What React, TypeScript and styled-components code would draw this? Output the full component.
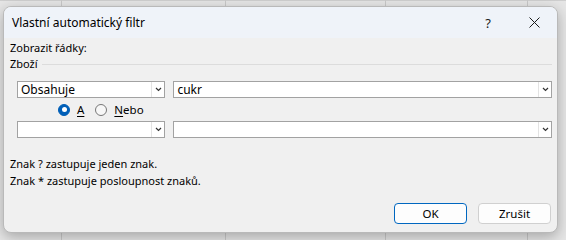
import React, { useState } from 'react';
import styled, { createGlobalStyle } from 'styled-components';

const GlobalStyle = createGlobalStyle`
  html, body {
    margin: 0;
    padding: 0;
  }
  body {
    width: 566px;
    height: 240px;
    overflow: hidden;
    font-family: "Noto Sans", "Open Sans", sans-serif;
    background-color: #e6e6e6;
    background-image:
      linear-gradient(#c9c9c9, #c9c9c9),
      linear-gradient(#c9c9c9, #c9c9c9),
      linear-gradient(#c9c9c9, #c9c9c9),
      linear-gradient(#c9c9c9, #c9c9c9),
      linear-gradient(#cfcfcf, #cfcfcf);
    background-size: 1px 240px, 1px 240px, 1px 240px, 1px 240px, 566px 1px;
    background-position: 61px 0, 225px 0, 385px 0, 527px 0, 0 0;
    background-repeat: no-repeat;
  }
`;

const Page = styled.div`
  padding: 6px 0 0 3px;
`;

const Dialog = styled.div`
  width: 555px;
  height: 227px;
  box-sizing: border-box;
  border: 1px solid #b9b9b9;
  border-radius: 8px;
  background: #f0f0f0;
  box-shadow: 0 4px 14px rgba(0, 0, 0, 0.28);
  overflow: hidden;
  display: flex;
  flex-direction: column;
  color: #000;
  font-size: 11px;
`;

const TitleBar = styled.div`
  height: 31px;
  background: #eff3f9;
  display: flex;
  align-items: center;
  padding-left: 8px;
  flex-shrink: 0;
`;

const Title = styled.div`
  flex: 1;
  font-size: 12px;
`;

const TitleButton = styled.button`
  width: 46px;
  height: 31px;
  border: none;
  background: transparent;
  padding: 0;
  display: flex;
  align-items: center;
  justify-content: center;
  font-family: inherit;
  font-size: 13px;
  color: #1a1a1a;
`;

const Body = styled.div`
  flex: 1;
  padding: 2px 5px 0 6px;
  display: flex;
  flex-direction: column;
`;

const Label = styled.div`
  line-height: 16px;
`;

const GroupHeader = styled.div`
  display: flex;
  align-items: center;
  gap: 4px;
  line-height: 16px;
  &::after {
    content: '';
    flex: 1;
    height: 1px;
    background: #dcdcdc;
  }
`;

const Criteria = styled.div`
  padding: 9px 0 0 7px;
  display: flex;
  flex-direction: column;
`;

const FieldRow = styled.div`
  display: flex;
  gap: 8px;
`;

const Combo = styled.div<{ $width: number }>`
  width: ${({ $width }) => $width}px;
  height: 17px;
  box-sizing: border-box;
  border: 1px solid #a2a2a2;
  background: #fff;
  display: flex;
  align-items: stretch;
`;

const ComboText = styled.div`
  flex: 1;
  padding-left: 3px;
  line-height: 15px;
  font-size: 12px;
`;

const ComboArrow = styled.div`
  width: 12px;
  border-left: 1px solid #e3e3e3;
  display: flex;
  align-items: center;
  justify-content: center;
`;

const RadioRow = styled.div`
  height: 23px;
  display: flex;
  align-items: center;
  padding-left: 41px;
  gap: 11px;
`;

const RadioOption = styled.label`
  display: flex;
  align-items: center;
  gap: 7px;
  font-size: 11.5px;
`;

const RadioCircle = styled.span<{ $checked: boolean }>`
  width: 12px;
  height: 12px;
  box-sizing: border-box;
  border-radius: 50%;
  display: inline-flex;
  align-items: center;
  justify-content: center;
  background: ${({ $checked }) => ($checked ? '#005fb8' : '#f7f7f7')};
  border: 1px solid ${({ $checked }) => ($checked ? '#005fb8' : '#777')};
  &::after {
    content: '';
    display: ${({ $checked }) => ($checked ? 'block' : 'none')};
    width: 5px;
    height: 5px;
    border-radius: 50%;
    background: #fff;
  }
`;

const Mnemonic = styled.span`
  text-decoration: underline;
  text-underline-offset: 2px;
`;

const Hints = styled.div`
  margin-top: 18px;
  display: flex;
  flex-direction: column;
  gap: 1px;
`;

const Hint = styled.div`
  line-height: 16px;
`;

const Footer = styled.div`
  margin-top: auto;
  padding: 0 1px 8px 0;
  display: flex;
  justify-content: flex-end;
  gap: 11px;
`;

const Button = styled.button<{ $primary?: boolean }>`
  width: 73px;
  height: 21px;
  box-sizing: border-box;
  border-radius: 4px;
  border: 1px solid ${({ $primary }) => ($primary ? '#0067c0' : '#d0d0d0')};
  background: #fdfdfd;
  font-family: inherit;
  font-size: 11.5px;
  color: #000;
  padding: 0;
`;

const Chevron = () => (
  <svg width="7" height="5" viewBox="0 0 7 5">
    <path d="M1 1 L3.5 3.5 L6 1" fill="none" stroke="#333" strokeWidth="1.2" />
  </svg>
);

export default function App() {
  const [mode, setMode] = useState<'and' | 'or'>('and');

  return (
    <>
      <GlobalStyle />
      <Page>
        <Dialog>
          <TitleBar>
            <Title>Vlastní automatický filtr</Title>
            <TitleButton>?</TitleButton>
            <TitleButton>
              <svg width="11" height="11" viewBox="0 0 11 11">
                <path d="M0.5 0.5 L10.5 10.5 M10.5 0.5 L0.5 10.5" stroke="#1a1a1a" strokeWidth="1" />
              </svg>
            </TitleButton>
          </TitleBar>
          <Body>
            <Label>Zobrazit řádky:</Label>
            <GroupHeader>Zboží</GroupHeader>
            <Criteria>
              <FieldRow>
                <Combo $width={149}>
                  <ComboText>Obsahuje</ComboText>
                  <ComboArrow><Chevron /></ComboArrow>
                </Combo>
                <Combo $width={380}>
                  <ComboText>cukr</ComboText>
                  <ComboArrow><Chevron /></ComboArrow>
                </Combo>
              </FieldRow>
              <RadioRow>
                <RadioOption onClick={() => setMode('and')}>
                  <RadioCircle $checked={mode === 'and'} />
                  <Mnemonic>A</Mnemonic>
                </RadioOption>
                <RadioOption onClick={() => setMode('or')}>
                  <RadioCircle $checked={mode === 'or'} />
                  <span><Mnemonic>N</Mnemonic>ebo</span>
                </RadioOption>
              </RadioRow>
              <FieldRow>
                <Combo $width={149}>
                  <ComboText />
                  <ComboArrow><Chevron /></ComboArrow>
                </Combo>
                <Combo $width={380}>
                  <ComboText />
                  <ComboArrow><Chevron /></ComboArrow>
                </Combo>
              </FieldRow>
            </Criteria>
            <Hints>
              <Hint>Znak ? zastupuje jeden znak.</Hint>
              <Hint>Znak * zastupuje posloupnost znaků.</Hint>
            </Hints>
            <Footer>
              <Button $primary>OK</Button>
              <Button>Zrušit</Button>
            </Footer>
          </Body>
        </Dialog>
      </Page>
    </>
  );
}
